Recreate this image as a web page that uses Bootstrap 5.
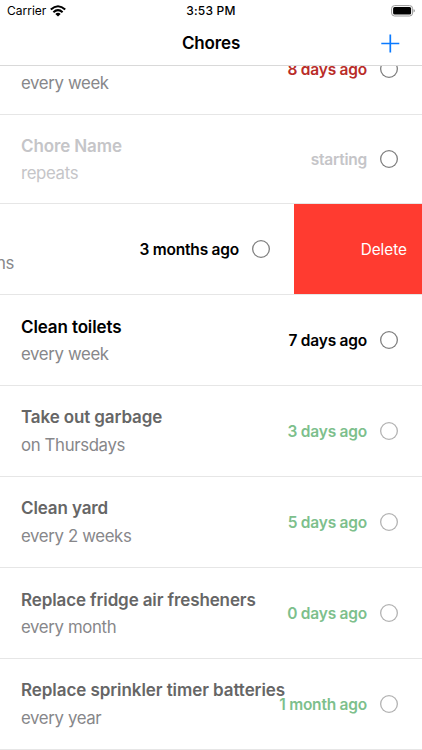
<!DOCTYPE html>
<html lang="en">
<head>
<meta charset="utf-8">
<meta name="viewport" content="width=device-width, initial-scale=1">
<title>Chores</title>
<link href="https://cdn.jsdelivr.net/npm/bootstrap@5.3.0/dist/css/bootstrap.min.css" rel="stylesheet">
<style>
  body { font-family: Inter, "Liberation Sans", sans-serif; }
  .screen { width: 422px; height: 750px; }
  .top-area { height: 66px; border-bottom: 1px solid #d9d9d9; }
  .status { height: 22px; font-size: 12px; padding: 0 7px; }
  .status > * { flex: 1 1 0; }
  .clock { font-weight: 500; letter-spacing: .2px; }
  .title-bar { height: 43px; font-size: 17px; font-weight: 600; letter-spacing: -.15px; padding: 0 22px 0 22px; }
  .title-bar > * { flex: 1 1 0; }
  .chores { height: 684px; }
  .chore { height: 91px; border-bottom: 1px solid #e6e6e6; padding: 0 24px 0 21px; flex: none; }
  .chore.first { margin-top: -42px; }
  .chore.blank { height: 89px; }
  .info { line-height: 27px; font-size: 17px; padding-top: 2px; white-space: nowrap; width: 0; }
  .roomy .info { line-height: 28px; padding-top: 0; }
  .name { font-weight: 600; letter-spacing: -.12px; color: #000; }
  .long .name { letter-spacing: -.07px; }
  .repeat { color: #87878a; font-size: 16.8px; letter-spacing: -.36px; }
  .when { font-size: 15.5px; font-weight: 600; line-height: 20px; letter-spacing: -.22px; margin-right: 13px; padding-top: 2px; white-space: nowrap; }
  .ring { width: 18px; height: 18px; box-shadow: inset 0 0 0 1.3px #808080; border-radius: 50%; flex: none; }
  .late { color: #b92c28; }
  .faint .name, .faint .repeat, .faint .when { color: #c5c5c8; }
  .done .name { color: #666; }
  .done .when { color: #7dbf8c; }
  .done .ring { box-shadow: inset 0 0 0 1.3px #b3b3b3; }
  .swiped { padding: 0; }
  .slid { width: 294px; padding-right: 24px; }
  .slid .info { margin-left: -104px; }
  .delete { width: 128px; background: #ff3b30; color: #fff; font-size: 15.3px; padding: 2px 15px 0 0; }
</style>
</head>
<body class="m-0 bg-white">
<main class="screen d-flex flex-column overflow-hidden bg-white text-black">
  <header class="top-area flex-shrink-0 bg-white position-relative">
    <div class="status d-flex align-items-center">
      <div class="d-flex align-items-center carrier">
        <span>Carrier</span>
        <svg class="ms-1" width="16" height="12" viewBox="0 0 16 12" aria-hidden="true"><g fill="none" stroke="#000" stroke-width="2.1"><path d="M.8 4.6Q8-2.1 15.2 4.6"/><path d="M3.4 7.3Q8 3.1 12.6 7.3"/></g><path d="M5.3 8.9Q8 6.6 10.7 8.9L8 11.6Z"/></svg>
      </div>
      <div class="clock text-center">3:53 PM</div>
      <div class="d-flex justify-content-end"><svg width="24" height="12" viewBox="0 0 24 12" aria-hidden="true"><rect x=".6" y=".6" width="21" height="10.4" rx="3" fill="none" stroke="#999"/><rect x="2.1" y="2.1" width="18" height="7.4" rx="1.5"/><path d="M22.6 4v3.6q1.2-.5 1.2-1.8T22.6 4Z" fill="#888"/></svg></div>
    </div>
    <div class="title-bar d-flex align-items-center">
      <span></span><div class="text-center">Chores</div>
      <div class="d-flex justify-content-end"><svg width="20" height="20" viewBox="0 0 20 20" aria-label="Add"><path d="M10.3 .5v18M1.3 9.5h18" stroke="#0a7aff" stroke-width="1.7"/></svg></div>
    </div>
  </header>
  <section class="chores d-flex flex-column overflow-hidden">
    <div class="chore first d-flex align-items-center justify-content-between"><div class="info"><div class="name">&nbsp;</div><div class="repeat">every week</div></div><div class="d-flex align-items-center"><span class="when late">8 days ago</span><span class="ring"></span></div></div>
    <div class="chore blank faint d-flex align-items-center justify-content-between"><div class="info"><div class="name">Chore Name</div><div class="repeat">repeats</div></div><div class="d-flex align-items-center"><span class="when">starting</span><span class="ring"></span></div></div>
    <div class="chore swiped d-flex align-items-stretch"><div class="slid d-flex align-items-center justify-content-between"><div class="info"><div class="name">&nbsp;</div><div class="repeat">every 6 months</div></div><div class="d-flex align-items-center"><span class="when">3 months ago</span><span class="ring"></span></div></div><div class="delete d-flex align-items-center justify-content-end">Delete</div></div>
    <div class="chore d-flex align-items-center justify-content-between"><div class="info"><div class="name">Clean toilets</div><div class="repeat">every week</div></div><div class="d-flex align-items-center"><span class="when">7 days ago</span><span class="ring"></span></div></div>
    <div class="chore roomy done d-flex align-items-center justify-content-between"><div class="info"><div class="name">Take out garbage</div><div class="repeat">on Thursdays</div></div><div class="d-flex align-items-center"><span class="when">3 days ago</span><span class="ring"></span></div></div>
    <div class="chore roomy done d-flex align-items-center justify-content-between"><div class="info"><div class="name">Clean yard</div><div class="repeat">every 2 weeks</div></div><div class="d-flex align-items-center"><span class="when">5 days ago</span><span class="ring"></span></div></div>
    <div class="chore done d-flex align-items-center justify-content-between"><div class="info"><div class="name">Replace fridge air fresheners</div><div class="repeat">every month</div></div><div class="d-flex align-items-center"><span class="when">0 days ago</span><span class="ring"></span></div></div>
    <div class="chore roomy long done d-flex align-items-center justify-content-between"><div class="info"><div class="name">Replace sprinkler timer batteries</div><div class="repeat">every year</div></div><div class="d-flex align-items-center"><span class="when">1 month ago</span><span class="ring"></span></div></div>
  </section>
</main>
<script src="https://cdn.jsdelivr.net/npm/bootstrap@5.3.0/dist/js/bootstrap.bundle.min.js"></script>
</body>
</html>
